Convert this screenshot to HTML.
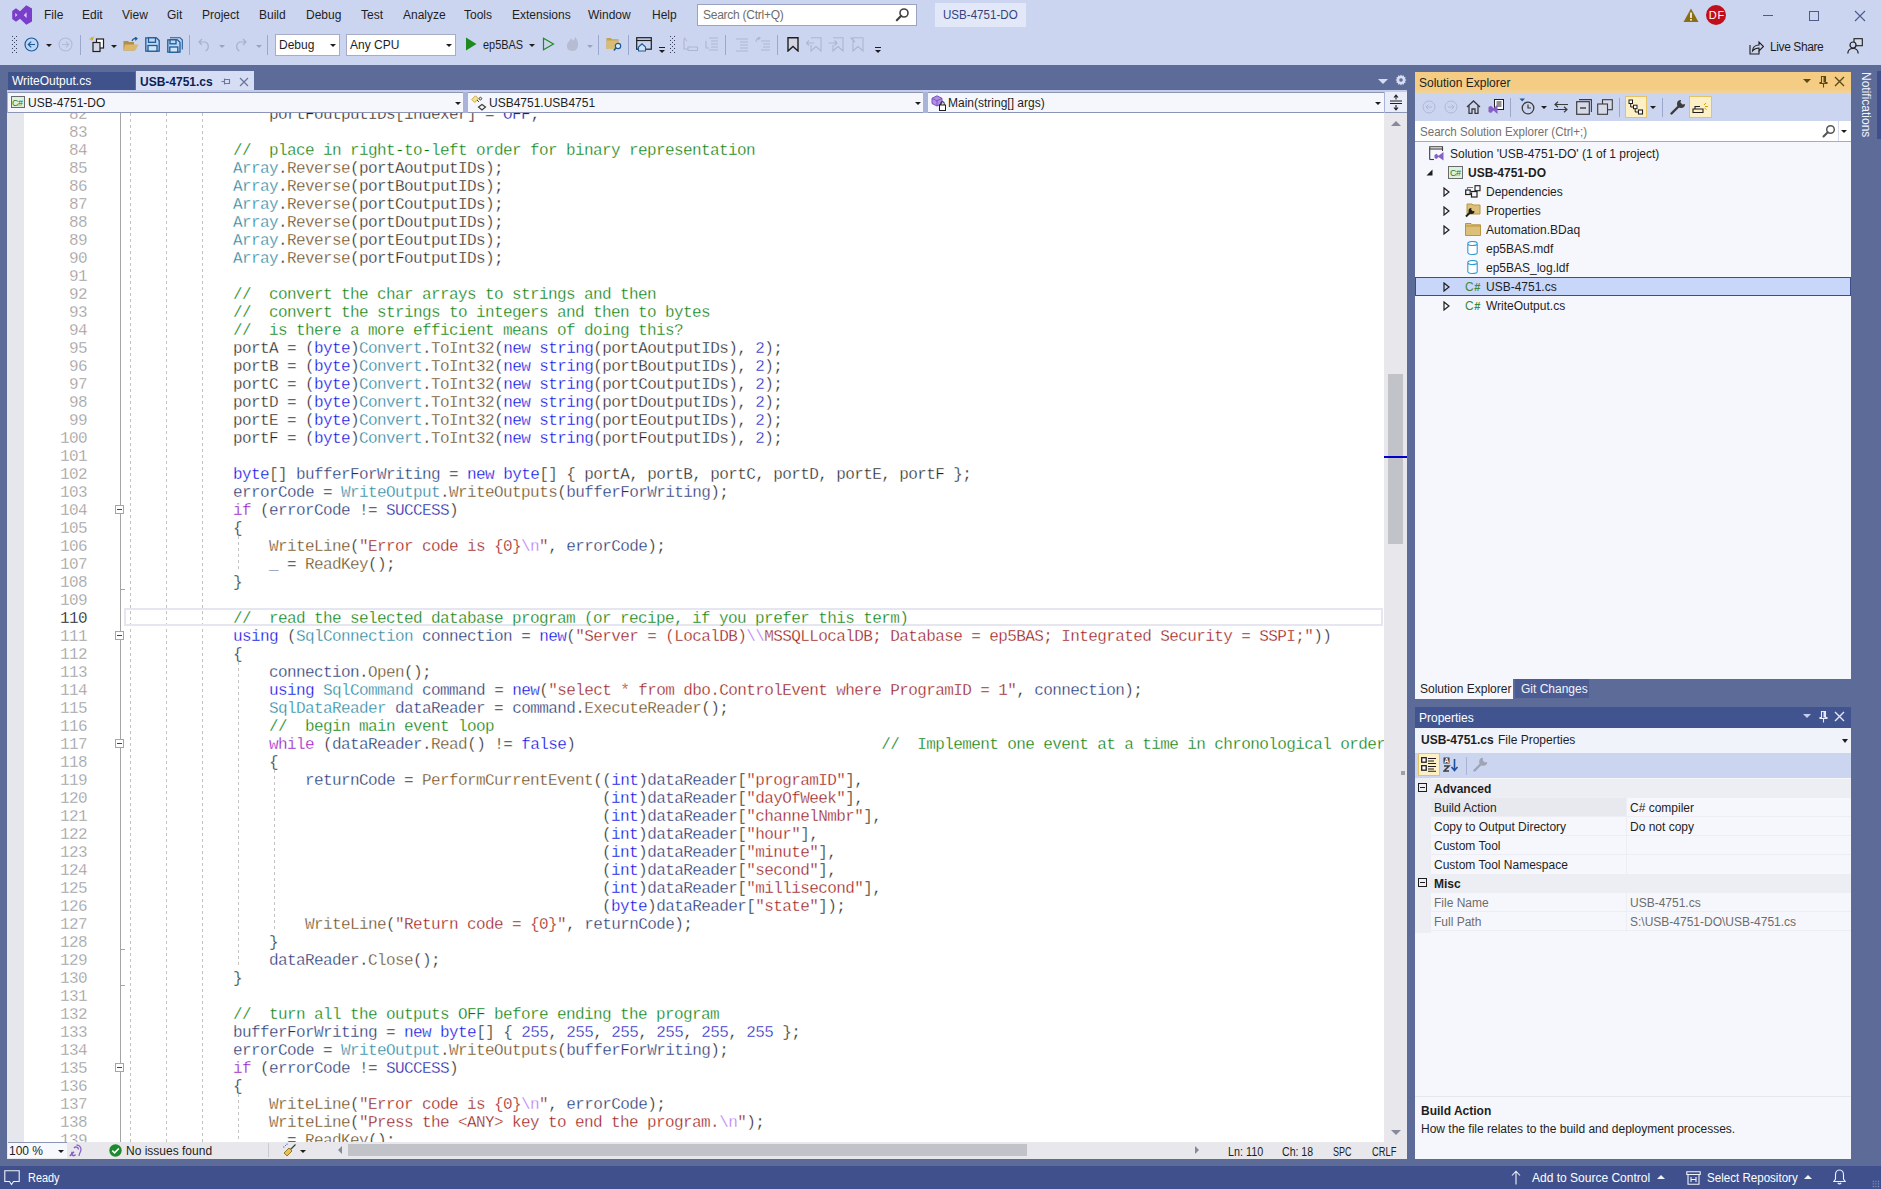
<!DOCTYPE html>
<html><head><meta charset="utf-8">
<style>
*{margin:0;padding:0;box-sizing:border-box}
html,body{width:1881px;height:1189px;overflow:hidden}
body{background:#CCD5F0;font-family:"Liberation Sans",sans-serif;font-size:12px;color:#1E1E1E;position:relative}
.a{position:absolute}
.t{position:absolute;white-space:pre;line-height:14px}
/* code */
#code{position:absolute;left:24px;top:113px;width:1360px;height:1029px;background:#fff;overflow:hidden}
.ln{position:absolute;left:0;width:63px;text-align:right;color:#939393}
.cl{position:absolute;left:101px;white-space:pre}
.code{font-family:"Liberation Mono",monospace;font-size:16px;line-height:18px;letter-spacing:-0.6px;-webkit-text-stroke:0.32px #fff}
.k{color:#0000E6}.c{color:#007800}.ty{color:#23819E}.m{color:#664516}.v{color:#1A2E6E}.s{color:#951111}.e{color:#B776FB}.p{color:#8F08C4}.cn{color:#1818A8}.nu{color:#1F1FBF}.cur{color:#000}
</style></head>
<body>
<!--TOP-->
<!-- ===== title/menu bar ===== -->
<svg class="a" style="left:11px;top:5px" width="22" height="21" viewBox="0 0 22 21"><path d="M1.2 6 L5 3.2 L9 6.2 L15.3 0.3 L21 3.5 V16.5 L15.3 19.7 L9 13.8 L5 16.7 L1.2 14 Z" fill="#7A3FC8"/><path d="M4.3 8 L6.4 10 L4.3 12 Z M15.6 7.3 V13 L12.8 10.2 Z" fill="#E6CCFF"/></svg>
<div class="t" style="left:44px;top:8px;color:#1E1E1E">File</div>
<div class="t" style="left:82px;top:8px;color:#1E1E1E">Edit</div>
<div class="t" style="left:122px;top:8px;color:#1E1E1E">View</div>
<div class="t" style="left:167px;top:8px;color:#1E1E1E">Git</div>
<div class="t" style="left:202px;top:8px;color:#1E1E1E">Project</div>
<div class="t" style="left:259px;top:8px;color:#1E1E1E">Build</div>
<div class="t" style="left:306px;top:8px;color:#1E1E1E">Debug</div>
<div class="t" style="left:361px;top:8px;color:#1E1E1E">Test</div>
<div class="t" style="left:403px;top:8px;color:#1E1E1E">Analyze</div>
<div class="t" style="left:464px;top:8px;color:#1E1E1E">Tools</div>
<div class="t" style="left:512px;top:8px;color:#1E1E1E">Extensions</div>
<div class="t" style="left:588px;top:8px;color:#1E1E1E">Window</div>
<div class="t" style="left:652px;top:8px;color:#1E1E1E">Help</div>
<div class="a" style="left:697px;top:4px;width:220px;height:22px;background:#fff;border:1px solid #9AA3C4"></div>
<div class="t" style="left:703px;top:8px;color:#6D6D6D;letter-spacing:-0.25px">Search (Ctrl+Q)</div>
<svg class="a" style="left:895px;top:7px" width="15" height="15" viewBox="0 0 15 15"><circle cx="9" cy="6" r="4" fill="none" stroke="#424242" stroke-width="1.6"/><path d="M6.2 8.8 L1.8 13.2" stroke="#424242" stroke-width="2.2" stroke-linecap="round"/></svg>
<div class="a" style="left:935px;top:3px;width:91px;height:24px;background:#E3E8F8"></div>
<div class="t" style="left:943px;top:8px;color:#34437A;transform-origin:0 0;transform:scaleX(0.965)">USB-4751-DO</div>
<svg class="a" style="left:1683px;top:8px" width="16" height="15" viewBox="0 0 16 15"><path d="M8 0.5 L15.5 14 H0.5 Z" fill="#8C6E12"/><rect x="7.2" y="4.5" width="1.6" height="5.5" fill="#fff"/><rect x="7.2" y="11" width="1.6" height="1.6" fill="#fff"/></svg>
<div class="a" style="left:1706px;top:5px;width:20px;height:20px;border-radius:50%;background:#C00E1B"></div>
<div class="t" style="left:1707px;top:8px;width:20px;text-align:center;color:#fff;font-size:11px;letter-spacing:1px">DF</div>
<div class="a" style="left:1763px;top:15px;width:10px;height:1px;background:#4D5B8C"></div>
<div class="a" style="left:1809px;top:11px;width:10px;height:10px;border:1px solid #4D5B8C"></div>
<svg class="a" style="left:1854px;top:10px" width="12" height="12" viewBox="0 0 12 12"><path d="M1 1 L11 11 M11 1 L1 11" stroke="#4D5B8C" stroke-width="1.1"/></svg>

<!-- ===== toolbar ===== -->
<svg class="a" style="left:12px;top:36px" width="5" height="17" viewBox="0 0 5 17" fill="#3A3F5C"><rect x="0" y="0" width="1" height="1"/><rect x="4" y="0" width="1" height="1"/><rect x="0" y="4" width="1" height="1"/><rect x="4" y="4" width="1" height="1"/><rect x="0" y="8" width="1" height="1"/><rect x="4" y="8" width="1" height="1"/><rect x="0" y="12" width="1" height="1"/><rect x="4" y="12" width="1" height="1"/><rect x="0" y="16" width="1" height="1"/><rect x="4" y="16" width="1" height="1"/><rect x="2" y="2" width="1" height="1"/><rect x="2" y="6" width="1" height="1"/><rect x="2" y="10" width="1" height="1"/><rect x="2" y="14" width="1" height="1"/></svg>
<svg class="a" style="left:24px;top:37px" width="15" height="15" viewBox="0 0 15 15"><circle cx="7.5" cy="7.5" r="6.5" fill="#BCD6F5" stroke="#1F5A96" stroke-width="1.2"/><path d="M11 7.5 H4.5 M7.2 4.6 L4.3 7.5 L7.2 10.4" fill="none" stroke="#1F5A96" stroke-width="1.2"/></svg>
<div class="a" style="left:46px;top:44px;width:0;height:0;border-left:3px solid transparent;border-right:3px solid transparent;border-top:3px solid #1E1E1E"></div>
<svg class="a" style="left:58px;top:37px" width="15" height="15" viewBox="0 0 15 15"><circle cx="7.5" cy="7.5" r="6.5" fill="none" stroke="#B2B9D4" stroke-width="1.1"/><path d="M4 7.5 H10.5 M7.8 4.6 L10.7 7.5 L7.8 10.4" fill="none" stroke="#B2B9D4" stroke-width="1.1"/></svg>
<div class="a" style="left:80px;top:35px;width:1px;height:20px;background:#9CA7CC"></div>
<svg class="a" style="left:89px;top:36px" width="17" height="17" viewBox="0 0 17 17"><path d="M2.5 1 L3.5 4 M0.5 3 L4 3.2 M4.6 0.6 L2.8 4.6" stroke="#D6A100" stroke-width="1"/><rect x="7.5" y="3" width="7" height="9" fill="#fff" stroke="#1E1E1E" stroke-width="1.2"/><rect x="4" y="6.5" width="7" height="9" fill="#D4D8E6" stroke="#1E1E1E" stroke-width="1.2"/></svg>
<div class="a" style="left:111px;top:45px;width:0;height:0;border-left:3px solid transparent;border-right:3px solid transparent;border-top:3px solid #1E1E1E"></div>
<svg class="a" style="left:123px;top:37px" width="16" height="15" viewBox="0 0 16 15"><path d="M0.5 4 H5 L6 5 H11 V13.5 H0.5 Z" fill="#B08F4A"/><path d="M2 7.5 H15.5 L12.5 13.5 H0.5 Z" fill="#DCB86A"/><path d="M9 4 Q10 1.2 13.5 1.5 M12 0 L14 1.5 L12.3 3.3" fill="none" stroke="#1F5A96" stroke-width="1.2"/></svg>
<svg class="a" style="left:145px;top:37px" width="15" height="15" viewBox="0 0 15 15"><path d="M0.8 0.8 H11.5 L14.2 3.5 V14.2 H0.8 Z" fill="#BCD6F5" stroke="#1F5A96" stroke-width="1.3"/><rect x="3.5" y="0.8" width="7" height="4.5" fill="#BCD6F5" stroke="#1F5A96" stroke-width="1.3"/><rect x="3" y="8.5" width="9" height="5.7" fill="#D0E2F7" stroke="#1F5A96" stroke-width="1.3"/></svg>
<svg class="a" style="left:167px;top:37px" width="16" height="16" viewBox="0 0 16 16"><path d="M3 0.7 H13 L15.3 3 V12.5" fill="none" stroke="#1F5A96" stroke-width="1.1"/><path d="M0.8 2.8 H10.5 L13 5.3 V15.2 H0.8 Z" fill="#BCD6F5" stroke="#1F5A96" stroke-width="1.3"/><rect x="3" y="2.8" width="6" height="4" fill="#BCD6F5" stroke="#1F5A96" stroke-width="1.3"/><rect x="2.8" y="10" width="8" height="5.2" fill="#D0E2F7" stroke="#1F5A96" stroke-width="1.3"/></svg>
<div class="a" style="left:189px;top:35px;width:1px;height:20px;background:#9CA7CC"></div>
<svg class="a" style="left:198px;top:37px" width="14" height="15" viewBox="0 0 14 15"><path d="M4 2 L1 5 L4 8 M1.2 5 H7.5 A5 5 0 0 1 7.5 14" fill="none" stroke="#A8B0CC" stroke-width="1.2"/></svg>
<div class="a" style="left:219px;top:45px;width:0;height:0;border-left:3px solid transparent;border-right:3px solid transparent;border-top:3px solid #9AA2BE"></div>
<svg class="a" style="left:233px;top:37px" width="14" height="15" viewBox="0 0 14 15"><path d="M10 2 L13 5 L10 8 M12.8 5 H6.5 A5 5 0 0 0 6.5 14" fill="none" stroke="#A8B0CC" stroke-width="1.2"/></svg>
<div class="a" style="left:256px;top:45px;width:0;height:0;border-left:3px solid transparent;border-right:3px solid transparent;border-top:3px solid #9AA2BE"></div>
<div class="a" style="left:267px;top:35px;width:1px;height:20px;background:#9CA7CC"></div>
<div class="a" style="left:275px;top:34px;width:65px;height:22px;background:#fff;border:1px solid #A4ACC6"></div>
<div class="t" style="left:279px;top:38px">Debug</div>
<div class="a" style="left:330px;top:44px;width:0;height:0;border-left:3px solid transparent;border-right:3px solid transparent;border-top:3px solid #1E1E1E"></div>
<div class="a" style="left:346px;top:34px;width:110px;height:22px;background:#fff;border:1px solid #A4ACC6"></div>
<div class="t" style="left:350px;top:38px">Any CPU</div>
<div class="a" style="left:446px;top:44px;width:0;height:0;border-left:3px solid transparent;border-right:3px solid transparent;border-top:3px solid #1E1E1E"></div>
<svg class="a" style="left:465px;top:37px" width="12" height="14" viewBox="0 0 12 14"><path d="M1 0.5 L11.5 7 L1 13.5 Z" fill="#1E8A1E"/></svg>
<div class="t" style="left:483px;top:38px;transform-origin:0 0;transform:scaleX(0.91)">ep5BAS</div>
<div class="a" style="left:529px;top:44px;width:0;height:0;border-left:3px solid transparent;border-right:3px solid transparent;border-top:3px solid #1E1E1E"></div>
<svg class="a" style="left:542px;top:37px" width="13" height="14" viewBox="0 0 13 14"><path d="M1.5 1.2 L11.5 7 L1.5 12.8 Z" fill="none" stroke="#1E8A1E" stroke-width="1.2"/></svg>
<svg class="a" style="left:565px;top:36px" width="15" height="16" viewBox="0 0 15 16"><path d="M7.5 15 C3 15 1.5 12 2 9 C2.5 6 5 5 6 2 C7 4 8 5 9 4 C9.5 3 10 1 10 1 C12 3 13.5 6 13 10 C12.5 13 10.5 15 7.5 15 Z" fill="#B6BCD2"/></svg>
<div class="a" style="left:587px;top:45px;width:0;height:0;border-left:3px solid transparent;border-right:3px solid transparent;border-top:3px solid #9AA2BE"></div>
<div class="a" style="left:598px;top:35px;width:1px;height:20px;background:#9CA7CC"></div>
<svg class="a" style="left:606px;top:37px" width="17" height="15" viewBox="0 0 17 15"><path d="M0.5 1 H5 L6 2.2 H12.5 V12 H0.5 Z" fill="#C2A256"/><rect x="0.5" y="3.5" width="12" height="8.5" fill="#D9BD74"/><circle cx="12" cy="9" r="2.7" fill="#DDEBFA" stroke="#1F5A96" stroke-width="1.2"/><path d="M10.2 10.8 L7.8 13.5" stroke="#1F5A96" stroke-width="1.5"/></svg>
<div class="a" style="left:628px;top:35px;width:1px;height:20px;background:#9CA7CC"></div>
<svg class="a" style="left:636px;top:37px" width="16" height="15" viewBox="0 0 16 15"><rect x="0.7" y="0.7" width="14.6" height="11.5" fill="none" stroke="#1E1E1E" stroke-width="1.2"/><path d="M0.7 3.5 H15.3" stroke="#1E1E1E" stroke-width="1.2"/><path d="M2.5 10 L6 6.8 L9.5 10 V14 H2.5 Z" fill="#D0E2F7" stroke="#1F5A96" stroke-width="1.1"/></svg>
<div class="a" style="left:659px;top:47px;width:6px;height:1px;background:#1E1E1E"></div>
<div class="a" style="left:659px;top:50px;width:0;height:0;border-left:3px solid transparent;border-right:3px solid transparent;border-top:3px solid #1E1E1E"></div>
<svg class="a" style="left:670px;top:36px" width="5" height="17" viewBox="0 0 5 17" fill="#3A3F5C"><rect x="0" y="0" width="1" height="1"/><rect x="4" y="0" width="1" height="1"/><rect x="0" y="4" width="1" height="1"/><rect x="4" y="4" width="1" height="1"/><rect x="0" y="8" width="1" height="1"/><rect x="4" y="8" width="1" height="1"/><rect x="0" y="12" width="1" height="1"/><rect x="4" y="12" width="1" height="1"/><rect x="0" y="16" width="1" height="1"/><rect x="4" y="16" width="1" height="1"/><rect x="2" y="2" width="1" height="1"/><rect x="2" y="6" width="1" height="1"/><rect x="2" y="10" width="1" height="1"/><rect x="2" y="14" width="1" height="1"/></svg>
<svg class="a" style="left:683px;top:37px" width="15" height="15" viewBox="0 0 15 15"><path d="M1 0.5 L4 4 M5 10 H14.5 V13.5 H5 Z M1 2 V12 H5" fill="none" stroke="#AEB5CE" stroke-width="1.1"/></svg>
<svg class="a" style="left:704px;top:37px" width="15" height="15" viewBox="0 0 15 15"><path d="M5 1 H14 M7 4 H14 M7 7 H14 M7 10 H14 M5 13 H14 M2 4 V11 H5" fill="none" stroke="#AEB5CE" stroke-width="1.1"/></svg>
<div class="a" style="left:725px;top:35px;width:1px;height:20px;background:#9CA7CC"></div>
<svg class="a" style="left:735px;top:38px" width="14" height="14" viewBox="0 0 14 14"><path d="M1 1 H13 M5 4 H13 M5 7 H13 M5 10 H13 M1 13 H13" fill="none" stroke="#AEB5CE" stroke-width="1.1"/></svg>
<svg class="a" style="left:755px;top:37px" width="16" height="15" viewBox="0 0 16 15"><path d="M6 4 H15 M8 7 H15 M8 10 H15 M6 13 H15 M1 5 Q1 1 5 1 M3 -0 L5 1 L3 3" fill="none" stroke="#AEB5CE" stroke-width="1.1"/></svg>
<div class="a" style="left:777px;top:35px;width:1px;height:20px;background:#9CA7CC"></div>
<svg class="a" style="left:787px;top:37px" width="12" height="15" viewBox="0 0 12 15"><path d="M1 0.8 H11 V14 L6 9.5 L1 14 Z" fill="#D2D6E3" stroke="#1E1E1E" stroke-width="1.4"/></svg>
<svg class="a" style="left:806px;top:37px" width="16" height="15" viewBox="0 0 16 15"><path d="M5 0.8 H15 V14 L10 9.5 L5 14 V8 M0.5 6 H8 M3 3.5 L0.5 6 L3 8.5" fill="none" stroke="#AEB5CE" stroke-width="1.1"/></svg>
<svg class="a" style="left:828px;top:37px" width="16" height="15" viewBox="0 0 16 15"><path d="M5 0.8 H15 V14 L10 9.5 L5 14 V8 M0.5 6 H9 M6.5 3.5 L9 6 L6.5 8.5" fill="none" stroke="#AEB5CE" stroke-width="1.1"/></svg>
<svg class="a" style="left:850px;top:37px" width="15" height="15" viewBox="0 0 15 15"><path d="M3 0.8 H13 V14 L8 9.5 L3 14 Z M0.5 0.5 L5 5" fill="none" stroke="#AEB5CE" stroke-width="1.1"/></svg>
<div class="a" style="left:875px;top:47px;width:6px;height:1px;background:#1E1E1E"></div>
<div class="a" style="left:875px;top:50px;width:0;height:0;border-left:3px solid transparent;border-right:3px solid transparent;border-top:3px solid #1E1E1E"></div>

<svg class="a" style="left:1749px;top:40px" width="15" height="15" viewBox="0 0 15 15"><path d="M1 5 V14 H10 V11" fill="none" stroke="#1E1E1E" stroke-width="1.1"/><path d="M3.5 11 Q4 5 10 5 V2 L14.5 6.5 L10 11 V8 Q6 8 3.5 11 Z" fill="none" stroke="#1E1E1E" stroke-width="1.1"/></svg>
<div class="t" style="left:1770px;top:40px;letter-spacing:-0.4px">Live Share</div>
<svg class="a" style="left:1847px;top:38px" width="16" height="16" viewBox="0 0 16 16"><rect x="7" y="0.7" width="8.3" height="7" fill="#D6DBEA" stroke="#1E1E1E" stroke-width="1.1"/><circle cx="6" cy="7" r="3" fill="#CCD5F0" stroke="#1E1E1E" stroke-width="1.2"/><path d="M0.8 15.5 Q1 10.5 6 10.5 Q11 10.5 11.2 15.5" fill="none" stroke="#1E1E1E" stroke-width="1.2"/></svg>

<!--/TOP-->
<!-- frame -->
<div class="a" style="left:0;top:65px;width:1881px;height:1101px;background:#5D6B99"></div>

<!--EDITOR-->
<!-- doc tabs -->
<div class="a" style="left:8px;top:72px;width:127px;height:18px;background:#3F528C"></div>
<div class="t" style="left:12px;top:74px;color:#FFFFFF">WriteOutput.cs</div>
<div class="a" style="left:136px;top:71px;width:118px;height:19px;background:#D6DEF5"></div>
<div class="t" style="left:140px;top:75px;color:#0E1E54;font-weight:bold">USB-4751.cs</div>
<svg class="a" style="left:221px;top:77px" width="10" height="9" viewBox="0 0 10 9"><path d="M0.5 4.5 H3.5 M3.5 1.5 V7.5 M3.5 2.5 H8.5 V6.5 H3.5" fill="none" stroke="#6D7899" stroke-width="1.1"/></svg>
<svg class="a" style="left:239px;top:77px" width="10" height="10" viewBox="0 0 10 10"><path d="M1 1 L9 9 M9 1 L1 9" stroke="#6D7899" stroke-width="1.3"/></svg>
<div class="a" style="left:1378px;top:79px;width:0;height:0;border-left:5px solid transparent;border-right:5px solid transparent;border-top:5px solid #D6DDF3"></div>
<svg class="a" style="left:1395px;top:74px" width="12" height="12" viewBox="0 0 12 12"><path d="M6 0.5 L7 2 L8.8 1.3 L9 3 L10.7 3.2 L10 5 L11.5 6 L10 7 L10.7 8.8 L9 9 L8.8 10.7 L7 10 L6 11.5 L5 10 L3.2 10.7 L3 9 L1.3 8.8 L2 7 L0.5 6 L2 5 L1.3 3.2 L3 3 L3.2 1.3 L5 2 Z" fill="#D6DDF3"/><circle cx="6" cy="6" r="1.8" fill="#5D6B99"/></svg>
<div class="a" style="left:7px;top:90px;width:1400px;height:2px;background:#C3CCEB"></div>

<!-- nav bar -->
<div class="a" style="left:7px;top:92px;width:1400px;height:21px;background:#A9B4D8"></div>
<div class="a" style="left:8px;top:92px;width:455px;height:21px;background:#F5F7FD;border-top:1px solid #8C95B4;border-bottom:1px solid #8C95B4"></div>
<div class="a" style="left:468px;top:92px;width:455px;height:21px;background:#F5F7FD;border-top:1px solid #8C95B4;border-bottom:1px solid #8C95B4"></div>
<div class="a" style="left:928px;top:92px;width:456px;height:21px;background:#F5F7FD;border-top:1px solid #8C95B4;border-bottom:1px solid #8C95B4"></div>
<div class="a" style="left:1385px;top:92px;width:22px;height:21px;background:#E9EDF9;border-bottom:1px solid #8C95B4"></div>
<div class="a" style="left:11px;top:96px;width:14px;height:12px;background:#DFF0DF;border:1px solid #6A6A6A"></div>
<div class="t" style="left:12px;top:95.5px;font-size:9px;color:#1E7A1E;letter-spacing:-0.5px">C#</div>
<div class="t" style="left:28px;top:96px">USB-4751-DO</div>
<div class="a" style="left:455px;top:102px;width:0;height:0;border-left:3px solid transparent;border-right:3px solid transparent;border-top:3px solid #1E1E1E"></div>
<svg class="a" style="left:471px;top:95px" width="16" height="16" viewBox="0 0 16 16"><path d="M0.8 4.5 L4.5 0.8 L7.5 3.8 L3.8 7.5 Z" fill="#F3E39A" stroke="#C9A93A" stroke-width="1"/><path d="M6 5 L8 7 M8.5 4.5 A1.3 1.3 0 1 1 8.6 4.6" fill="none" stroke="#3C3C3C" stroke-width="1"/><path d="M11 9.5 L14.5 12 L11 15 L7.5 12 Z" fill="none" stroke="#3C3C3C" stroke-width="1.2"/></svg>
<div class="t" style="left:489px;top:96px">USB4751.USB4751</div>
<div class="a" style="left:915px;top:102px;width:0;height:0;border-left:3px solid transparent;border-right:3px solid transparent;border-top:3px solid #1E1E1E"></div>
<svg class="a" style="left:931px;top:95px" width="16" height="16" viewBox="0 0 16 16"><path d="M6 0.8 L11 3.3 V8.5 L6 11 L1 8.5 V3.3 Z" fill="#B08FE0" stroke="#7B4FC2" stroke-width="1"/><path d="M1 3.3 L6 5.8 L11 3.3 M6 5.8 V11" fill="none" stroke="#7B4FC2" stroke-width="0.9"/><rect x="8.5" y="10" width="6" height="5.5" fill="#fff" stroke="#1E1E1E" stroke-width="1"/><path d="M9.8 10 V8.3 A1.7 1.7 0 0 1 13.2 8.3 V10" fill="none" stroke="#1E1E1E" stroke-width="1"/></svg>
<div class="t" style="left:948px;top:96px">Main(string[] args)</div>
<div class="a" style="left:1375px;top:102px;width:0;height:0;border-left:3px solid transparent;border-right:3px solid transparent;border-top:3px solid #1E1E1E"></div>
<svg class="a" style="left:1389px;top:94px" width="14" height="17" viewBox="0 0 14 17"><path d="M1 7 H13 M1 9.5 H13" stroke="#1E1E1E" stroke-width="1.1"/><path d="M7 1.5 V5.5 M7 11 V15.5 M5 3.5 L7 1.2 L9 3.5 M5 13.5 L7 15.8 L9 13.5" fill="none" stroke="#1E1E1E" stroke-width="1.1"/></svg>

<!-- editor margin -->
<div class="a" style="left:7px;top:113px;width:17px;height:1029px;background:#E6E7ED"></div>

<!--/EDITOR-->
<div id="code" class="code">
<!--ADORN-->
<div class="a" style="left:106px;top:0;width:1px;height:1029px;background:repeating-linear-gradient(to bottom,#C2C2C2 0 3px,transparent 3px 6px)"></div>
<div class="a" style="left:142px;top:0;width:1px;height:1029px;background:repeating-linear-gradient(to bottom,#C2C2C2 0 3px,transparent 3px 6px)"></div>
<div class="a" style="left:178px;top:0;width:1px;height:1029px;background:repeating-linear-gradient(to bottom,#C2C2C2 0 3px,transparent 3px 6px)"></div>
<div class="a" style="left:214px;top:423px;width:1px;height:36px;background:repeating-linear-gradient(to bottom,#C2C2C2 0 3px,transparent 3px 6px)"></div>
<div class="a" style="left:214px;top:549px;width:1px;height:306px;background:repeating-linear-gradient(to bottom,#C2C2C2 0 3px,transparent 3px 6px)"></div>
<div class="a" style="left:214px;top:981px;width:1px;height:54px;background:repeating-linear-gradient(to bottom,#C2C2C2 0 3px,transparent 3px 6px)"></div>
<div class="a" style="left:250px;top:657px;width:1px;height:162px;background:repeating-linear-gradient(to bottom,#C2C2C2 0 3px,transparent 3px 6px)"></div>
<div class="a" style="left:96px;top:0;width:1px;height:1029px;background:#A5A5A5"></div>
<div class="a" style="left:91px;top:392px;width:9px;height:9px;background:#fff;border:1px solid #A5A5A5"><div class="a" style="left:1px;top:3px;width:5px;height:1px;background:#444"></div></div>
<div class="a" style="left:91px;top:518px;width:9px;height:9px;background:#fff;border:1px solid #A5A5A5"><div class="a" style="left:1px;top:3px;width:5px;height:1px;background:#444"></div></div>
<div class="a" style="left:91px;top:626px;width:9px;height:9px;background:#fff;border:1px solid #A5A5A5"><div class="a" style="left:1px;top:3px;width:5px;height:1px;background:#444"></div></div>
<div class="a" style="left:91px;top:950px;width:9px;height:9px;background:#fff;border:1px solid #A5A5A5"><div class="a" style="left:1px;top:3px;width:5px;height:1px;background:#444"></div></div>
<div class="a" style="left:97px;top:476px;width:4px;height:1px;background:#A5A5A5"></div>
<div class="a" style="left:97px;top:836px;width:4px;height:1px;background:#A5A5A5"></div>
<div class="a" style="left:97px;top:872px;width:4px;height:1px;background:#A5A5A5"></div>
<div class="a" style="left:100px;top:495px;width:1259px;height:18px;border:2px solid #E6E6F0"></div>
<!--/ADORN-->
<!--CODE-->
<div class="ln" style="top:-7px">82</div><div class="cl" style="top:-7px">                portFoutputIDs[indexer] = <span class="cn">OFF</span>;</div>
<div class="ln" style="top:11px">83</div><div class="cl" style="top:11px"></div>
<div class="ln" style="top:29px">84</div><div class="cl" style="top:29px">            <span class="c">//  place in right-to-left order for binary representation</span></div>
<div class="ln" style="top:47px">85</div><div class="cl" style="top:47px">            <span class="ty">Array</span>.<span class="m">Reverse</span>(portAoutputIDs);</div>
<div class="ln" style="top:65px">86</div><div class="cl" style="top:65px">            <span class="ty">Array</span>.<span class="m">Reverse</span>(portBoutputIDs);</div>
<div class="ln" style="top:83px">87</div><div class="cl" style="top:83px">            <span class="ty">Array</span>.<span class="m">Reverse</span>(portCoutputIDs);</div>
<div class="ln" style="top:101px">88</div><div class="cl" style="top:101px">            <span class="ty">Array</span>.<span class="m">Reverse</span>(portDoutputIDs);</div>
<div class="ln" style="top:119px">89</div><div class="cl" style="top:119px">            <span class="ty">Array</span>.<span class="m">Reverse</span>(portEoutputIDs);</div>
<div class="ln" style="top:137px">90</div><div class="cl" style="top:137px">            <span class="ty">Array</span>.<span class="m">Reverse</span>(portFoutputIDs);</div>
<div class="ln" style="top:155px">91</div><div class="cl" style="top:155px"></div>
<div class="ln" style="top:173px">92</div><div class="cl" style="top:173px">            <span class="c">//  convert the char arrays to strings and then</span></div>
<div class="ln" style="top:191px">93</div><div class="cl" style="top:191px">            <span class="c">//  convert the strings to integers and then to bytes</span></div>
<div class="ln" style="top:209px">94</div><div class="cl" style="top:209px">            <span class="c">//  is there a more efficient means of doing this?</span></div>
<div class="ln" style="top:227px">95</div><div class="cl" style="top:227px">            portA = (<span class="k">byte</span>)<span class="ty">Convert</span>.<span class="m">ToInt32</span>(<span class="k">new</span> <span class="k">string</span>(portAoutputIDs), <span class="nu">2</span>);</div>
<div class="ln" style="top:245px">96</div><div class="cl" style="top:245px">            portB = (<span class="k">byte</span>)<span class="ty">Convert</span>.<span class="m">ToInt32</span>(<span class="k">new</span> <span class="k">string</span>(portBoutputIDs), <span class="nu">2</span>);</div>
<div class="ln" style="top:263px">97</div><div class="cl" style="top:263px">            portC = (<span class="k">byte</span>)<span class="ty">Convert</span>.<span class="m">ToInt32</span>(<span class="k">new</span> <span class="k">string</span>(portCoutputIDs), <span class="nu">2</span>);</div>
<div class="ln" style="top:281px">98</div><div class="cl" style="top:281px">            portD = (<span class="k">byte</span>)<span class="ty">Convert</span>.<span class="m">ToInt32</span>(<span class="k">new</span> <span class="k">string</span>(portDoutputIDs), <span class="nu">2</span>);</div>
<div class="ln" style="top:299px">99</div><div class="cl" style="top:299px">            portE = (<span class="k">byte</span>)<span class="ty">Convert</span>.<span class="m">ToInt32</span>(<span class="k">new</span> <span class="k">string</span>(portEoutputIDs), <span class="nu">2</span>);</div>
<div class="ln" style="top:317px">100</div><div class="cl" style="top:317px">            portF = (<span class="k">byte</span>)<span class="ty">Convert</span>.<span class="m">ToInt32</span>(<span class="k">new</span> <span class="k">string</span>(portFoutputIDs), <span class="nu">2</span>);</div>
<div class="ln" style="top:335px">101</div><div class="cl" style="top:335px"></div>
<div class="ln" style="top:353px">102</div><div class="cl" style="top:353px">            <span class="k">byte</span>[] <span class="v">bufferForWriting</span> = <span class="k">new</span> <span class="k">byte</span>[] { portA, portB, portC, portD, portE, portF };</div>
<div class="ln" style="top:371px">103</div><div class="cl" style="top:371px">            <span class="v">errorCode</span> = <span class="ty">WriteOutput</span>.<span class="m">WriteOutputs</span>(<span class="v">bufferForWriting</span>);</div>
<div class="ln" style="top:389px">104</div><div class="cl" style="top:389px">            <span class="p">if</span> (<span class="v">errorCode</span> != <span class="cn">SUCCESS</span>)</div>
<div class="ln" style="top:407px">105</div><div class="cl" style="top:407px">            {</div>
<div class="ln" style="top:425px">106</div><div class="cl" style="top:425px">                <span class="m">WriteLine</span>(<span class="s">"Error code is {0}</span><span class="e">\n</span><span class="s">"</span>, <span class="v">errorCode</span>);</div>
<div class="ln" style="top:443px">107</div><div class="cl" style="top:443px">                <span class="v">_</span> = <span class="m">ReadKey</span>();</div>
<div class="ln" style="top:461px">108</div><div class="cl" style="top:461px">            }</div>
<div class="ln" style="top:479px">109</div><div class="cl" style="top:479px"></div>
<div class="ln cur" style="top:497px">110</div><div class="cl" style="top:497px">            <span class="c">//  read the selected database program (or recipe, if you prefer this term)</span></div>
<div class="ln" style="top:515px">111</div><div class="cl" style="top:515px">            <span class="k">using</span> (<span class="ty">SqlConnection</span> <span class="v">connection</span> = <span class="k">new</span>(<span class="s">"Server = (LocalDB)</span><span class="e">\\</span><span class="s">MSSQLLocalDB; Database = ep5BAS; Integrated Security = SSPI;"</span>))</div>
<div class="ln" style="top:533px">112</div><div class="cl" style="top:533px">            {</div>
<div class="ln" style="top:551px">113</div><div class="cl" style="top:551px">                <span class="v">connection</span>.<span class="m">Open</span>();</div>
<div class="ln" style="top:569px">114</div><div class="cl" style="top:569px">                <span class="k">using</span> <span class="ty">SqlCommand</span> <span class="v">command</span> = <span class="k">new</span>(<span class="s">"select * from dbo.ControlEvent where ProgramID = 1"</span>, <span class="v">connection</span>);</div>
<div class="ln" style="top:587px">115</div><div class="cl" style="top:587px">                <span class="ty">SqlDataReader</span> <span class="v">dataReader</span> = <span class="v">command</span>.<span class="m">ExecuteReader</span>();</div>
<div class="ln" style="top:605px">116</div><div class="cl" style="top:605px">                <span class="c">//  begin main event loop</span></div>
<div class="ln" style="top:623px">117</div><div class="cl" style="top:623px">                <span class="p">while</span> (<span class="v">dataReader</span>.<span class="m">Read</span>() != <span class="k">false</span>)                                  <span class="c">//  Implement one event at a time in chronological order</span></div>
<div class="ln" style="top:641px">118</div><div class="cl" style="top:641px">                {</div>
<div class="ln" style="top:659px">119</div><div class="cl" style="top:659px">                    <span class="v">returnCode</span> = <span class="m">PerformCurrentEvent</span>((<span class="k">int</span>)<span class="v">dataReader</span>[<span class="s">"programID"</span>],</div>
<div class="ln" style="top:677px">120</div><div class="cl" style="top:677px">                                                     (<span class="k">int</span>)<span class="v">dataReader</span>[<span class="s">"dayOfWeek"</span>],</div>
<div class="ln" style="top:695px">121</div><div class="cl" style="top:695px">                                                     (<span class="k">int</span>)<span class="v">dataReader</span>[<span class="s">"channelNmbr"</span>],</div>
<div class="ln" style="top:713px">122</div><div class="cl" style="top:713px">                                                     (<span class="k">int</span>)<span class="v">dataReader</span>[<span class="s">"hour"</span>],</div>
<div class="ln" style="top:731px">123</div><div class="cl" style="top:731px">                                                     (<span class="k">int</span>)<span class="v">dataReader</span>[<span class="s">"minute"</span>],</div>
<div class="ln" style="top:749px">124</div><div class="cl" style="top:749px">                                                     (<span class="k">int</span>)<span class="v">dataReader</span>[<span class="s">"second"</span>],</div>
<div class="ln" style="top:767px">125</div><div class="cl" style="top:767px">                                                     (<span class="k">int</span>)<span class="v">dataReader</span>[<span class="s">"millisecond"</span>],</div>
<div class="ln" style="top:785px">126</div><div class="cl" style="top:785px">                                                     (<span class="k">byte</span>)<span class="v">dataReader</span>[<span class="s">"state"</span>]);</div>
<div class="ln" style="top:803px">127</div><div class="cl" style="top:803px">                    <span class="m">WriteLine</span>(<span class="s">"Return code = {0}"</span>, <span class="v">returnCode</span>);</div>
<div class="ln" style="top:821px">128</div><div class="cl" style="top:821px">                }</div>
<div class="ln" style="top:839px">129</div><div class="cl" style="top:839px">                <span class="v">dataReader</span>.<span class="m">Close</span>();</div>
<div class="ln" style="top:857px">130</div><div class="cl" style="top:857px">            }</div>
<div class="ln" style="top:875px">131</div><div class="cl" style="top:875px"></div>
<div class="ln" style="top:893px">132</div><div class="cl" style="top:893px">            <span class="c">//  turn all the outputs OFF before ending the program</span></div>
<div class="ln" style="top:911px">133</div><div class="cl" style="top:911px">            <span class="v">bufferForWriting</span> = <span class="k">new</span> <span class="k">byte</span>[] { <span class="nu">255</span>, <span class="nu">255</span>, <span class="nu">255</span>, <span class="nu">255</span>, <span class="nu">255</span>, <span class="nu">255</span> };</div>
<div class="ln" style="top:929px">134</div><div class="cl" style="top:929px">            <span class="v">errorCode</span> = <span class="ty">WriteOutput</span>.<span class="m">WriteOutputs</span>(<span class="v">bufferForWriting</span>);</div>
<div class="ln" style="top:947px">135</div><div class="cl" style="top:947px">            <span class="p">if</span> (<span class="v">errorCode</span> != <span class="cn">SUCCESS</span>)</div>
<div class="ln" style="top:965px">136</div><div class="cl" style="top:965px">            {</div>
<div class="ln" style="top:983px">137</div><div class="cl" style="top:983px">                <span class="m">WriteLine</span>(<span class="s">"Error code is {0}</span><span class="e">\n</span><span class="s">"</span>, <span class="v">errorCode</span>);</div>
<div class="ln" style="top:1001px">138</div><div class="cl" style="top:1001px">                <span class="m">WriteLine</span>(<span class="s">"Press the &lt;ANY&gt; key to end the program.</span><span class="e">\n</span><span class="s">"</span>);</div>
<div class="ln" style="top:1019px">139</div><div class="cl" style="top:1019px">                <span class="v">_</span> = <span class="m">ReadKey</span>();</div>
<!--/CODE-->
</div>
<!--BOTTOM-->
<!-- vertical scrollbar -->
<div class="a" style="left:1384px;top:113px;width:23px;height:1029px;background:#E8E8EC"></div>
<div class="a" style="left:1391px;top:121px;width:0;height:0;border-left:5px solid transparent;border-right:5px solid transparent;border-bottom:5px solid #868999"></div>
<div class="a" style="left:1391px;top:1130px;width:0;height:0;border-left:5px solid transparent;border-right:5px solid transparent;border-top:5px solid #868999"></div>
<div class="a" style="left:1388px;top:374px;width:15px;height:170px;background:#C2C3C9"></div>
<div class="a" style="left:1384px;top:456px;width:23px;height:2px;background:#0000C8"></div>
<div class="a" style="left:1401px;top:771px;width:4px;height:4px;background:#A0A0A0"></div>
<!-- bottom editor bar -->
<div class="a" style="left:7px;top:1142px;width:1400px;height:17px;background:#E8E8EC"></div>
<div class="a" style="left:8px;top:1142px;width:59px;height:16px;background:#F6F8FD;border-top:1px solid #8C95B4"></div>
<div class="t" style="left:9px;top:1144px;color:#1E1E1E">100 %</div>
<div class="a" style="left:58px;top:1150px;width:0;height:0;border-left:3px solid transparent;border-right:3px solid transparent;border-top:3px solid #1E1E1E"></div>
<svg class="a" style="left:69px;top:1144px" width="14" height="14" viewBox="0 0 14 14"><path d="M7.5 1 A4.5 4.5 0 0 1 12 5.5 C12 8 10 9 10 12 M5 4 A2.5 2.5 0 0 1 9.5 5.5" fill="none" stroke="#8661C5" stroke-width="1.3"/><path d="M0.8 12 L5 7.8 M3.5 8 A2 2 0 1 0 6.5 10.5" fill="none" stroke="#8661C5" stroke-width="1.6"/></svg>
<svg class="a" style="left:109px;top:1144px" width="13" height="13" viewBox="0 0 13 13"><circle cx="6.5" cy="6.5" r="6.2" fill="#1E8A2E"/><path d="M3.3 6.6 L5.6 8.9 L9.8 4.5" fill="none" stroke="#fff" stroke-width="1.6"/></svg>
<div class="t" style="left:126px;top:1144px;color:#1E1E1E">No issues found</div>
<div class="a" style="left:268px;top:1143px;width:1px;height:14px;background:#C8CAD4"></div>
<svg class="a" style="left:282px;top:1143px" width="15" height="15" viewBox="0 0 15 15"><path d="M8.5 6.5 L13.5 1.5" stroke="#3C3C3C" stroke-width="1.3"/><path d="M2 10 L7 5 L10 8 L5 13 Z" fill="#E5C25C" stroke="#8C6E12" stroke-width="0.9"/><path d="M3 2 L4 3 M5 0.5 V2 M1 4 H2.5" stroke="#4B6EC5" stroke-width="0.9"/></svg>
<div class="a" style="left:300px;top:1150px;width:0;height:0;border-left:3px solid transparent;border-right:3px solid transparent;border-top:3px solid #1E1E1E"></div>
<div class="a" style="left:338px;top:1146px;width:0;height:0;border-top:4px solid transparent;border-bottom:4px solid transparent;border-right:4px solid #868999"></div>
<div class="a" style="left:348px;top:1144px;width:679px;height:12px;background:#C2C3C9"></div>
<div class="a" style="left:1195px;top:1146px;width:0;height:0;border-top:4px solid transparent;border-bottom:4px solid transparent;border-left:4px solid #868999"></div>
<div class="t" style="left:1228px;top:1145px;color:#1E1E1E;transform-origin:0 0;transform:scaleX(0.9)">Ln: 110</div>
<div class="t" style="left:1282px;top:1145px;color:#1E1E1E;transform-origin:0 0;transform:scaleX(0.88)">Ch: 18</div>
<div class="t" style="left:1333px;top:1145px;color:#1E1E1E;transform-origin:0 0;transform:scaleX(0.75)">SPC</div>
<div class="t" style="left:1372px;top:1145px;color:#1E1E1E;transform-origin:0 0;transform:scaleX(0.78)">CRLF</div>

<!-- status bar -->
<div class="a" style="left:0;top:1166px;width:1881px;height:23px;background:#40508D"></div>
<svg class="a" style="left:4px;top:1170px" width="16" height="16" viewBox="0 0 16 16"><path d="M0.8 0.8 H15.2 V11.5 H9.5 L7.5 14.5 L5.5 11.5 H0.8 Z" fill="none" stroke="#F0F3FA" stroke-width="1.1"/></svg>
<div class="t" style="left:28px;top:1171px;color:#FFFFFF;transform-origin:0 0;transform:scaleX(0.91)">Ready</div>
<svg class="a" style="left:1511px;top:1170px" width="10" height="15" viewBox="0 0 10 15"><path d="M5 14.5 V1.5 M1 5.5 L5 1.2 L9 5.5" fill="none" stroke="#F0F3FA" stroke-width="1.1"/></svg>
<div class="t" style="left:1532px;top:1171px;color:#FFFFFF">Add to Source Control</div>
<div class="a" style="left:1657px;top:1175px;width:0;height:0;border-left:4px solid transparent;border-right:4px solid transparent;border-bottom:4px solid #F0F3FA"></div>
<svg class="a" style="left:1686px;top:1171px" width="15" height="14" viewBox="0 0 15 14"><path d="M0.8 0.8 H14.2 V3.5 H0.8 Z M2 3.5 V13.2 H13 V3.5 M5 6 V11 M10 6 V11 M5 8.5 H10" fill="none" stroke="#F0F3FA" stroke-width="1.1"/></svg>
<div class="t" style="left:1707px;top:1171px;color:#FFFFFF;transform-origin:0 0;transform:scaleX(0.965)">Select Repository</div>
<div class="a" style="left:1804px;top:1175px;width:0;height:0;border-left:4px solid transparent;border-right:4px solid transparent;border-bottom:4px solid #F0F3FA"></div>
<svg class="a" style="left:1833px;top:1169px" width="13" height="16" viewBox="0 0 13 16"><path d="M6.5 1 C3.5 1 2.5 3.5 2.5 6 V10 L0.8 12.5 H12.2 L10.5 10 V6 C10.5 3.5 9.5 1 6.5 1 Z M4.8 14 Q6.5 15.8 8.2 14" fill="none" stroke="#F0F3FA" stroke-width="1.1"/></svg>
<div class="a" style="left:1872px;top:1180px;width:8px;height:8px;background:radial-gradient(circle,#8C98C4 0.7px,transparent 0.9px) 0 0/2.6px 2.6px"></div>

<!--/BOTTOM-->

<!--RIGHT-->
<!-- ===== Solution Explorer ===== -->
<div class="a" style="left:1415px;top:72px;width:436px;height:21px;background:linear-gradient(#F5CC84 0,#F5CC84 16px,#EFD49C 21px)"></div>
<div class="t" style="left:1419px;top:76px;color:#1E1E1E">Solution Explorer</div>
<div class="a" style="left:1803px;top:79px;width:0;height:0;border-left:4px solid transparent;border-right:4px solid transparent;border-top:4px solid #5C4A14"></div>
<svg class="a" style="left:1819px;top:76px" width="9" height="12" viewBox="0 0 9 12"><path d="M2.5 0.5 H6.5 V6.5 H8 V7.5 H1 V6.5 H2.5 Z M4.5 7.5 V11.5" fill="none" stroke="#5C4A14" stroke-width="1.1"/><rect x="4.5" y="1" width="2" height="5.5" fill="#5C4A14"/></svg>
<svg class="a" style="left:1834px;top:76px" width="11" height="11" viewBox="0 0 11 11"><path d="M1 1 L10 10 M10 1 L1 10" stroke="#5C4A14" stroke-width="1.4"/></svg>
<div class="a" style="left:1415px;top:93px;width:436px;height:28px;background:#CCD5F0"></div>
<svg class="a" style="left:1422px;top:100px" width="14" height="14" viewBox="0 0 14 14"><circle cx="7" cy="7" r="6" fill="none" stroke="#AFB8D6" stroke-width="1"/><path d="M10 7 H4 M6.5 4.5 L4 7 L6.5 9.5" fill="none" stroke="#AFB8D6" stroke-width="1"/></svg>
<svg class="a" style="left:1444px;top:100px" width="14" height="14" viewBox="0 0 14 14"><circle cx="7" cy="7" r="6" fill="none" stroke="#AFB8D6" stroke-width="1"/><path d="M4 7 H10 M7.5 4.5 L10 7 L7.5 9.5" fill="none" stroke="#AFB8D6" stroke-width="1"/></svg>
<svg class="a" style="left:1466px;top:100px" width="15" height="14" viewBox="0 0 15 14"><path d="M1 7 L7.5 1 L14 7 M3 5.5 V13.3 H6 V9 H9 V13.3 H12 V5.5" fill="none" stroke="#3C3C3C" stroke-width="1.3"/></svg>
<svg class="a" style="left:1488px;top:99px" width="16" height="16" viewBox="0 0 16 16"><rect x="6.5" y="0.5" width="9" height="10" fill="#fff" stroke="#1E1E1E" stroke-width="1"/><path d="M8.5 3 H13.5 M8.5 5 H13.5 M8.5 7 H13.5" stroke="#1E1E1E" stroke-width="1"/><path d="M0.5 8 L3 6.8 L5.5 9.3 L9.5 5.8 V15 L5.5 11.5 L3 14 L0.5 13 Z" fill="#8661C5"/></svg>
<div class="a" style="left:1510px;top:98px;width:1px;height:19px;background:#9CA7CC"></div>
<svg class="a" style="left:1519px;top:98px" width="16" height="17" viewBox="0 0 16 17"><path d="M0.5 0.5 H6 L3.2 3.5 Z" fill="#1F5A96"/><circle cx="9" cy="10" r="5.8" fill="none" stroke="#3C3C3C" stroke-width="1.3"/><path d="M9 6.5 V10 H12" fill="none" stroke="#3C3C3C" stroke-width="1.2"/></svg>
<div class="a" style="left:1541px;top:106px;width:0;height:0;border-left:3px solid transparent;border-right:3px solid transparent;border-top:3px solid #1E1E1E"></div>
<svg class="a" style="left:1553px;top:101px" width="16" height="12" viewBox="0 0 16 12"><path d="M15 3.5 H2 M5 0.8 L2 3.5 L5 6.2 M1 8.5 H14 M11 5.8 L14 8.5 L11 11.2" fill="none" stroke="#3C3C3C" stroke-width="1.2"/></svg>
<svg class="a" style="left:1576px;top:99px" width="16" height="16" viewBox="0 0 16 16"><path d="M3 0.6 H15.4 V13" fill="none" stroke="#3C3C3C" stroke-width="1.1"/><rect x="0.7" y="2.7" width="12.6" height="12.6" fill="#D6DAE8" stroke="#3C3C3C" stroke-width="1.2"/><path d="M4 9 H10" stroke="#3C3C3C" stroke-width="1.4"/></svg>
<svg class="a" style="left:1597px;top:99px" width="16" height="16" viewBox="0 0 16 16"><rect x="5.5" y="0.7" width="9.8" height="10" fill="#D6DAE8" stroke="#3C3C3C" stroke-width="1.1"/><rect x="0.7" y="5" width="9.8" height="10.3" fill="#D6DAE8" stroke="#3C3C3C" stroke-width="1.1"/></svg>
<div class="a" style="left:1619px;top:98px;width:1px;height:19px;background:#9CA7CC"></div>
<div class="a" style="left:1625px;top:96px;width:22px;height:22px;background:#FDF0C6;border:1px solid #E5C365"></div>
<svg class="a" style="left:1628px;top:99px" width="16" height="16" viewBox="0 0 16 16"><rect x="1" y="1" width="3.5" height="3.5" fill="#fff" stroke="#1E1E1E" stroke-width="1"/><rect x="5.5" y="6.2" width="3.5" height="3.5" fill="#fff" stroke="#1E1E1E" stroke-width="1"/><rect x="10.5" y="11" width="4" height="4" fill="#fff" stroke="#1E1E1E" stroke-width="1.1"/><path d="M2.7 4.5 V8 H5.5 M7.2 9.7 V13 H10.5" fill="none" stroke="#1E1E1E" stroke-width="1"/></svg>
<div class="a" style="left:1650px;top:106px;width:0;height:0;border-left:3px solid transparent;border-right:3px solid transparent;border-top:3px solid #1E1E1E"></div>
<div class="a" style="left:1662px;top:98px;width:1px;height:19px;background:#9CA7CC"></div>
<svg class="a" style="left:1670px;top:99px" width="16" height="16" viewBox="0 0 16 16"><path d="M1.5 14.5 L8 8" stroke="#3C3C3C" stroke-width="2.4" stroke-linecap="round"/><path d="M11 1 A4 4 0 1 0 15 5 L12.5 5.5 L10.5 3.5 Z" fill="#3C3C3C"/></svg>
<div class="a" style="left:1689px;top:96px;width:23px;height:22px;background:#FDF0C6;border:1px solid #E5C365"></div>
<svg class="a" style="left:1692px;top:100px" width="17" height="14" viewBox="0 0 17 14"><path d="M1 9 H11 V12.5 H1 Z M3 9 V6.5 H8" fill="none" stroke="#1E1E1E" stroke-width="1.1"/><path d="M12 5 L14 3 M13 6.5 H16 M12.5 8 L14.5 9.5" stroke="#D6A100" stroke-width="1"/></svg>
<!-- search -->
<div class="a" style="left:1415px;top:121px;width:436px;height:21px;background:#FFFFFF;border-bottom:1px solid #A3ABC6"></div>
<div class="t" style="left:1420px;top:125px;color:#717171;transform-origin:0 0;transform:scaleX(0.965)">Search Solution Explorer (Ctrl+;)</div>
<svg class="a" style="left:1822px;top:124px" width="14" height="14" viewBox="0 0 14 14"><circle cx="8.5" cy="5.5" r="3.8" fill="none" stroke="#555" stroke-width="1.5"/><path d="M5.8 8.2 L1.5 12.5" stroke="#555" stroke-width="2.1" stroke-linecap="round"/></svg>
<div class="a" style="left:1838px;top:121px;width:1px;height:20px;background:#D6DBEA"></div>
<div class="a" style="left:1841px;top:130px;width:0;height:0;border-left:3px solid transparent;border-right:3px solid transparent;border-top:3px solid #1E1E1E"></div>
<!-- tree -->
<div class="a" style="left:1415px;top:142px;width:436px;height:537px;background:#F6F7FC"></div>
<svg class="a" style="left:1429px;top:146px" width="16" height="15" viewBox="0 0 16 15"><path d="M0.7 13.5 V0.7 H13.5 V5" fill="none" stroke="#3C3C3C" stroke-width="1.1"/><path d="M0.7 3 H13.5" stroke="#3C3C3C" stroke-width="1.1"/><path d="M0.7 13.5 H5" stroke="#3C3C3C" stroke-width="1.1"/><path d="M5.5 9 L7.5 7.8 L9.5 9.8 L14.5 6 V14.5 L9.5 11 L7.5 13 L5.5 12 Z" fill="#8661C5"/></svg>
<div class="t" style="left:1450px;top:147px">Solution 'USB-4751-DO' (1 of 1 project)</div>
<svg class="a" style="left:1426px;top:169px" width="7" height="7" viewBox="0 0 7 7"><path d="M6.5 0.5 V6.5 H0.5 Z" fill="#1E1E1E"/></svg>
<div class="a" style="left:1448px;top:166px;width:15px;height:13px;background:#DFF0DF;border:1px solid #6A6A6A"></div>
<div class="t" style="left:1450px;top:166px;font-size:9px;color:#1E7A1E;letter-spacing:-0.5px">C#</div>
<div class="t" style="left:1468px;top:166px;font-weight:bold;color:#1E1E1E">USB-4751-DO</div>
<!-- rows -->
<div class="a" style="left:1415px;top:277px;width:436px;height:19px;background:#C8D6FA;border:1px solid #3A4D8C"></div>
<svg class="a" style="left:1443px;top:187px" width="7" height="10" viewBox="0 0 7 10"><path d="M1 1 L6 5 L1 9 Z" fill="none" stroke="#1E1E1E" stroke-width="1.2"/></svg>
<svg class="a" style="left:1465px;top:185px" width="16" height="13" viewBox="0 0 16 13"><rect x="0.7" y="5" width="4.5" height="4.5" fill="none" stroke="#1E1E1E" stroke-width="1.2"/><rect x="6.5" y="6.5" width="5.5" height="5.5" fill="none" stroke="#1E1E1E" stroke-width="1.2"/><rect x="10" y="0.7" width="5" height="5" fill="none" stroke="#1E1E1E" stroke-width="1.1"/><path d="M2.5 5 V2.5 H8 M5 7.5 H7" fill="none" stroke="#707070" stroke-width="1.1"/></svg>
<div class="t" style="left:1486px;top:185px">Dependencies</div>
<svg class="a" style="left:1443px;top:206px" width="7" height="10" viewBox="0 0 7 10"><path d="M1 1 L6 5 L1 9 Z" fill="none" stroke="#1E1E1E" stroke-width="1.2"/></svg>
<svg class="a" style="left:1465px;top:203px" width="16" height="15" viewBox="0 0 16 15"><path d="M2 1 H7 L8 2 H15 V11 H2 Z" fill="#DCC07A" stroke="#B8963F" stroke-width="1"/><path d="M1 13.5 L5.5 9" stroke="#1E1E1E" stroke-width="2"/><path d="M6.5 5 A3 3 0 1 0 9.5 8 L7.8 8.3 L6.2 6.7 Z" fill="#1E1E1E"/></svg>
<div class="t" style="left:1486px;top:204px">Properties</div>
<svg class="a" style="left:1443px;top:225px" width="7" height="10" viewBox="0 0 7 10"><path d="M1 1 L6 5 L1 9 Z" fill="none" stroke="#1E1E1E" stroke-width="1.2"/></svg>
<svg class="a" style="left:1465px;top:223px" width="16" height="13" viewBox="0 0 16 13"><path d="M0.5 0.5 H6 L7 1.8 H15.5 V12.5 H0.5 Z" fill="#DCC07A" stroke="#B8963F" stroke-width="1"/><path d="M0.5 3 H15.5" stroke="#B8963F" stroke-width="1"/></svg>
<div class="t" style="left:1486px;top:223px">Automation.BDaq</div>
<svg class="a" style="left:1467px;top:241px" width="11" height="14" viewBox="0 0 11 14"><path d="M0.8 2.5 V11.5 A4.7 2 0 0 0 10.2 11.5 V2.5 A4.7 2 0 0 0 0.8 2.5 A4.7 2 0 0 0 10.2 2.5" fill="#FFFFFF" stroke="#2E9BD3" stroke-width="1.1"/></svg>
<div class="t" style="left:1486px;top:242px">ep5BAS.mdf</div>
<svg class="a" style="left:1467px;top:260px" width="11" height="14" viewBox="0 0 11 14"><path d="M0.8 2.5 V11.5 A4.7 2 0 0 0 10.2 11.5 V2.5 A4.7 2 0 0 0 0.8 2.5 A4.7 2 0 0 0 10.2 2.5" fill="#FFFFFF" stroke="#2E9BD3" stroke-width="1.1"/></svg>
<div class="t" style="left:1486px;top:261px">ep5BAS_log.ldf</div>
<svg class="a" style="left:1443px;top:282px" width="7" height="10" viewBox="0 0 7 10"><path d="M1 1 L6 5 L1 9 Z" fill="none" stroke="#1E1E1E" stroke-width="1.2"/></svg>
<div class="t" style="left:1465px;top:280px;color:#3C8A3C;font-size:12px;letter-spacing:0.5px">C<span style="font-size:11px;font-weight:bold">#</span></div>
<div class="t" style="left:1486px;top:280px">USB-4751.cs</div>
<svg class="a" style="left:1443px;top:301px" width="7" height="10" viewBox="0 0 7 10"><path d="M1 1 L6 5 L1 9 Z" fill="none" stroke="#1E1E1E" stroke-width="1.2"/></svg>
<div class="t" style="left:1465px;top:299px;color:#3C8A3C;font-size:12px;letter-spacing:0.5px">C<span style="font-size:11px;font-weight:bold">#</span></div>
<div class="t" style="left:1486px;top:299px">WriteOutput.cs</div>
<!-- SE tabs -->
<div class="a" style="left:1415px;top:679px;width:98px;height:20px;background:#F6F7FC"></div>
<div class="t" style="left:1420px;top:682px;color:#1E1E1E">Solution Explorer</div>
<div class="a" style="left:1515px;top:679px;width:74px;height:19px;background:#4A5C93"></div>
<div class="t" style="left:1521px;top:682px;color:#F2F4FA">Git Changes</div>

<!-- ===== Properties ===== -->
<div class="a" style="left:1415px;top:707px;width:436px;height:21px;background:#42548F"></div>
<div class="t" style="left:1419px;top:711px;color:#FFFFFF">Properties</div>
<div class="a" style="left:1803px;top:714px;width:0;height:0;border-left:4px solid transparent;border-right:4px solid transparent;border-top:4px solid #C4CEEE"></div>
<svg class="a" style="left:1819px;top:711px" width="9" height="12" viewBox="0 0 9 12"><path d="M2.5 0.5 H6.5 V6.5 H8 V7.5 H1 V6.5 H2.5 Z M4.5 7.5 V11.5" fill="none" stroke="#E4E9F8" stroke-width="1.1"/><rect x="4.5" y="1" width="2" height="5.5" fill="#E4E9F8"/></svg>
<svg class="a" style="left:1834px;top:711px" width="11" height="11" viewBox="0 0 11 11"><path d="M1 1 L10 10 M10 1 L1 10" stroke="#E4E9F8" stroke-width="1.4"/></svg>
<div class="a" style="left:1415px;top:728px;width:436px;height:25px;background:#F0F3FA"></div>
<div class="t" style="left:1421px;top:733px;font-weight:bold;color:#1E1E1E">USB-4751.cs</div>
<div class="t" style="left:1498px;top:733px;color:#1E1E1E">File Properties</div>
<div class="a" style="left:1842px;top:739px;width:0;height:0;border-left:3px solid transparent;border-right:3px solid transparent;border-top:4px solid #1E1E1E"></div>
<div class="a" style="left:1415px;top:753px;width:436px;height:25px;background:#CCD5F0"></div>
<div class="a" style="left:1418px;top:753px;width:22px;height:23px;background:#FDF0C6;border:1px solid #E5C365"></div>
<svg class="a" style="left:1421px;top:757px" width="16" height="15" viewBox="0 0 16 15"><rect x="0.7" y="0.7" width="4.5" height="4.5" fill="#fff" stroke="#1E1E1E" stroke-width="1.3"/><rect x="0.7" y="8.7" width="4.5" height="4.5" fill="#fff" stroke="#1E1E1E" stroke-width="1.3"/><path d="M7 1.5 H15 M7 4 H13 M7 6.5 H15 M7 9.5 H15 M7 12 H13 M7 14.3 H15" stroke="#1E1E1E" stroke-width="1.1"/></svg>
<svg class="a" style="left:1443px;top:757px" width="16" height="15" viewBox="0 0 16 15"><rect x="0.5" y="0.5" width="6" height="6" fill="#3C3C3C"/><text x="1.2" y="6" font-family="Liberation Sans" font-size="6.5" font-weight="bold" fill="#fff">A</text><path d="M1 9 H6 L1 14 H6" fill="none" stroke="#3C3C3C" stroke-width="1.5"/><path d="M11.5 2 V13 M8.5 10 L11.5 13.5 L14.5 10" fill="none" stroke="#1F4FA0" stroke-width="1.6"/></svg>
<div class="a" style="left:1466px;top:757px;width:1px;height:18px;background:#A8B2D2"></div>
<svg class="a" style="left:1473px;top:757px" width="15" height="15" viewBox="0 0 15 15"><path d="M1.5 13.5 L7 8" stroke="#9EA3B5" stroke-width="2.4" stroke-linecap="round"/><path d="M10 0.8 A4 4 0 1 0 14.2 5 L11.8 5.5 L9.7 3.3 Z" fill="#9EA3B5"/></svg>
<!-- grid -->
<div class="a" style="left:1415px;top:778px;width:436px;height:155px;background:#F6F7FC"></div>
<div class="a" style="left:1415px;top:778px;width:16px;height:155px;background:#EDEEF3"></div>
<div class="a" style="left:1415px;top:779px;width:436px;height:19px;background:#EDEEF3"></div>
<div class="a" style="left:1415px;top:874px;width:436px;height:19px;background:#EDEEF3"></div>
<div class="a" style="left:1431px;top:798px;width:195px;height:19px;background:#E8E9EF"></div>
<div class="a" style="left:1626px;top:798px;width:1px;height:134px;background:#EDEEF3"></div>
<div class="a" style="left:1431px;top:816px;width:420px;height:1px;background:#EDEEF3"></div>
<div class="a" style="left:1431px;top:835px;width:420px;height:1px;background:#EDEEF3"></div>
<div class="a" style="left:1431px;top:854px;width:420px;height:1px;background:#EDEEF3"></div>
<div class="a" style="left:1431px;top:911px;width:420px;height:1px;background:#EDEEF3"></div>
<div class="a" style="left:1431px;top:930px;width:420px;height:1px;background:#EDEEF3"></div>
<div class="a" style="left:1418px;top:783px;width:9px;height:9px;border:1px solid #1E1E1E"><div class="a" style="left:1px;top:3px;width:5px;height:1px;background:#1E1E1E"></div></div>
<div class="t" style="left:1434px;top:782px;font-weight:bold;color:#1E1E1E">Advanced</div>
<div class="t" style="left:1434px;top:801px">Build Action</div>
<div class="t" style="left:1630px;top:801px">C# compiler</div>
<div class="t" style="left:1434px;top:820px">Copy to Output Directory</div>
<div class="t" style="left:1630px;top:820px">Do not copy</div>
<div class="t" style="left:1434px;top:839px">Custom Tool</div>
<div class="t" style="left:1434px;top:858px">Custom Tool Namespace</div>
<div class="a" style="left:1418px;top:878px;width:9px;height:9px;border:1px solid #1E1E1E"><div class="a" style="left:1px;top:3px;width:5px;height:1px;background:#1E1E1E"></div></div>
<div class="t" style="left:1434px;top:877px;font-weight:bold;color:#1E1E1E">Misc</div>
<div class="t" style="left:1434px;top:896px;color:#6D6D6D">File Name</div>
<div class="t" style="left:1630px;top:896px;color:#6D6D6D">USB-4751.cs</div>
<div class="t" style="left:1434px;top:915px;color:#6D6D6D">Full Path</div>
<div class="t" style="left:1630px;top:915px;color:#6D6D6D">S:\USB-4751-DO\USB-4751.cs</div>
<!-- description -->
<div class="a" style="left:1415px;top:933px;width:436px;height:226px;background:#F6F7FC"></div>
<div class="a" style="left:1415px;top:1096px;width:436px;height:1px;background:#E6E8F0"></div>
<div class="t" style="left:1421px;top:1104px;font-weight:bold;color:#1E1E1E">Build Action</div>
<div class="t" style="left:1421px;top:1122px;color:#1E1E1E">How the file relates to the build and deployment processes.</div>

<!-- notifications -->
<div class="t" style="left:1859px;top:72px;color:#F2F4FA;transform-origin:0 0;transform:rotate(90deg) translate(0,-14px)">Notifications</div>
<div class="a" style="left:1877px;top:71px;width:4px;height:68px;background:#3F4F8A"></div>

<!--/RIGHT-->
</body></html>
